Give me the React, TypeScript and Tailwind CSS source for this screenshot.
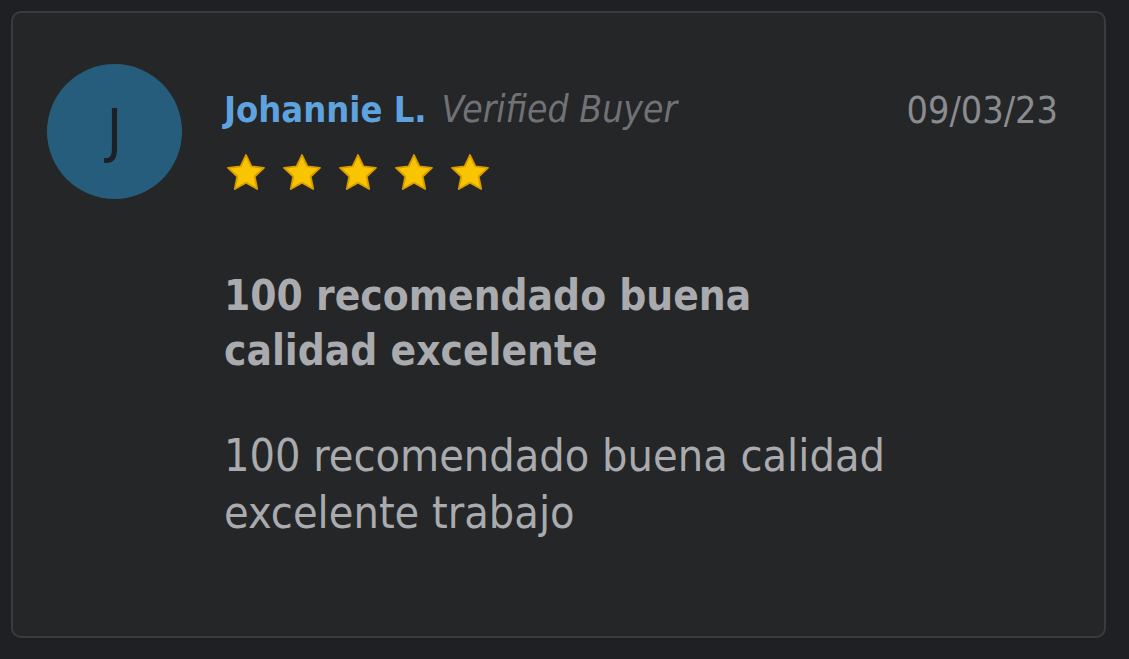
import { useState } from 'react';

function Star() {
  return (
    <svg viewBox="0 0 24 24" className="h-[44px] w-[44px]">
      <path
        d="M12 2.2l2.95 6.2 6.85.8-5.05 4.7 1.35 6.8L12 17.3l-6.1 3.4 1.35-6.8-5.05-4.7 6.85-.8z"
        fill="#f9c500"
        stroke="#d99c00"
        strokeWidth="1"
        strokeLinejoin="round"
      />
    </svg>
  );
}

export default function App() {
  const [rating] = useState(5);

  return (
    <div className="min-h-[659px] bg-[#1f2023] p-[11px]" style={{ fontFamily: '"DejaVu Sans Condensed", "DejaVu Sans", sans-serif' }}>
      <div className="h-[627px] w-[1095px] rounded-[10px] border-2 border-[#3a3b3c] bg-[#252628] pl-[34px] pr-[46px] pt-[51px]">
        <div className="flex">
          <div className="flex h-[135px] w-[135px] shrink-0 items-center justify-center rounded-full bg-[#275d7c] text-[58px] text-[#1c2024]">
            J
          </div>
          <div className="ml-[42px] flex-1">
            <div className="flex items-start justify-between pt-[26px]">
              <div className="flex items-baseline gap-[15px] leading-[40px]">
                <span className="text-[36px] font-semibold text-[#5ea3df]">Johannie L.</span>
                <span className="text-[37px] italic text-[#707275]">Verified Buyer</span>
              </div>
              <div className="text-[37.5px] leading-[40px] text-[#8a8c8f]">09/03/23</div>
            </div>
            <div className="mt-[21px] flex gap-[12px]">
              {Array.from({ length: rating }).map((_, i) => (
                <Star key={i} />
              ))}
            </div>
            <div className="mt-[73px] max-w-[670px] text-[42px] font-bold leading-[55px] text-[#a9abae]">
              100 recomendado buena calidad excelente
            </div>
            <div className="mt-[50px] max-w-[670px] text-[44.6px] leading-[57px] text-[#a9abae]">
              100 recomendado buena calidad excelente trabajo
            </div>
          </div>
        </div>
      </div>
    </div>
  );
}
